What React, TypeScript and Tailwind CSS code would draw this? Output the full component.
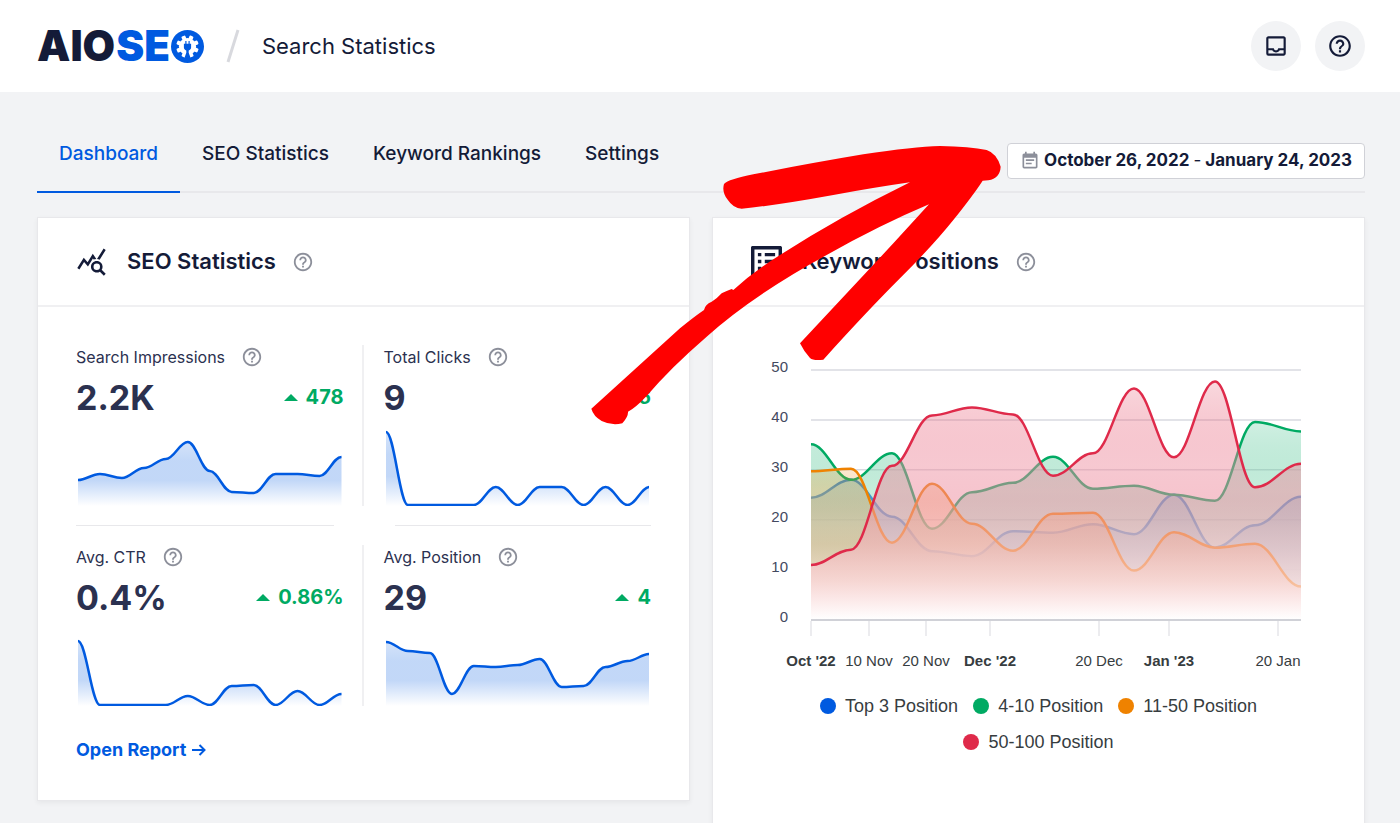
import type { ReactNode } from 'react'
import { MdEventNote, MdHelpOutline, MdOutlineInbox, MdQueryStats } from 'react-icons/md'

type Stat = { id: string, label: string, value: string, delta: string, points: number[] }
type Series = { id: string, name: string, color: string, mid: string, low: string, data: number[] }

const STATS: Stat[] = [
  { id: 'impressions', label: 'Search Impressions', value: '2.2K', delta: '478', points: [50, 44, 48, 38, 29, 12, 41, 62, 63, 44, 44, 46, 27] },
  { id: 'clicks', label: 'Total Clicks', value: '9', delta: '6', points: [2, 75, 75, 75, 75, 57, 75, 57, 57, 75, 57, 75, 57] },
  { id: 'ctr', label: 'Avg. CTR', value: '0.4%', delta: '0.86%', points: [11, 75, 75, 75, 75, 66, 75, 56, 55, 75, 61, 75, 64] },
  { id: 'position', label: 'Avg. Position', value: '29', delta: '4', points: [12, 21, 23, 64, 36, 37, 35, 29, 57, 56, 37, 31, 24] },
]

const SERIES: Series[] = [
  { id: 'top3', name: 'Top 3 Position', color: '#005ae0', mid: '#8db3f1', low: '#dde8fb', data: [24.4, 28, 20.6, 13.7, 12.7, 17.7, 17.4, 19.1, 17.1, 25, 14.4, 18.9, 24.6] },
  { id: 'top10', name: '4-10 Position', color: '#00aa63', mid: '#89d7b5', low: '#daf2e7', data: [35.1, 28, 33.3, 18.2, 25.5, 27.4, 32.6, 26.2, 26.8, 25, 23.8, 39.6, 37.7] },
  { id: 'top50', name: '11-50 Position', color: '#ef8200', mid: '#f5b577', low: '#fce6d6', data: [29.7, 30.2, 15.4, 27.2, 19.2, 13.8, 21.2, 21.4, 9.8, 17.5, 14.4, 15.2, 6.6] },
  { id: 'top100', name: '50-100 Position', color: '#df2a4a', mid: '#ed8d9f', low: '#fad3d6', data: [10.9, 14, 30.8, 40.9, 42.5, 41.1, 28.8, 33.3, 46.3, 32.5, 47.7, 26.5, 31.2] },
]

// weekly samples, the last one falls a day late
const WEEKS = [0, 7, 14, 21, 28, 35, 42, 49, 56, 63, 70, 77, 85]

const X_TICKS = [
  { x: 61, label: "Oct '22", bold: true },
  { x: 119, label: '10 Nov' },
  { x: 176, label: '20 Nov' },
  { x: 240, label: "Dec '22", bold: true },
  { x: 349, label: '20 Dec' },
  { x: 419, label: "Jan '23", bold: true },
  { x: 528, label: '20 Jan' },
]

// flat tangent at every sample
function smooth(pts: [number, number][]) {
  return pts.map(([x, y], i) => {
    if (!i) return `M${x} ${y}`
    const [px, py] = pts[i - 1]
    const k = (x - px) * 0.38
    return `C${px + k} ${py} ${x - k} ${y} ${x} ${y}`
  }).join('')
}

function Help({ topic }: { topic: string }) {
  return <button aria-label={`About ${topic}`} className="shrink-0 text-[#8c8f9a]"><MdHelpOutline size={22} /></button>
}

function Logo() {
  return (
    <a href="#home" aria-label="AIOSEO" className="flex items-center gap-px text-[42px] leading-none font-black text-[#141b38]">
      <span>AIO</span>
      <span className="text-[#005ae0]">SE</span>
      <svg width="33" height="33" viewBox="0 0 33 33">
        <circle cx="16.5" cy="16.5" r="16.5" fill="#005ae0" />
        <g fill="#fff">
          <circle cx="16.5" cy="16.5" r="8.600" />
          {[22, 67, 112, 157, 202, 247, 292, 337].map(a => (
            <rect key={a} x="14.400" y="5.200" width="4.200" height="5" rx="1" transform={`rotate(${a} 16.5 16.5)`} />
          ))}
        </g>
        <path d="M14.300 11v2.700h-1.400v3.800c0 1.500 1 2.500 2.400 2.900v2.300l-1.800 5h6l-1.800-5v-2.300c1.400-.4 2.400-1.400 2.400-2.900v-3.800h-1.400V11h-1.200v2.700h-2V11z" fill="#005ae0" />
      </svg>
    </a>
  )
}

function Sparkline({ id, points }: { id: string; points: number[] }) {
  const line = smooth(points.map((y, i) => [i * 22, y]))
  return (
    <div className="mt-3 px-[2px]">
      <svg viewBox="0 0 264 76" preserveAspectRatio="none" className="block h-[76px] w-full">
        <defs>
          <linearGradient id={`spark-${id}`} x1="0" y1="0" x2="0" y2="1">
            <stop offset="0" stopColor="#005ae0" stopOpacity=".17" />
            <stop offset=".3" stopColor="#005ae0" stopOpacity=".24" />
            <stop offset=".6" stopColor="#005ae0" stopOpacity=".24" />
            <stop offset="1" stopColor="#005ae0" stopOpacity="0" />
          </linearGradient>
        </defs>
        <path d={`${line}V76H0Z`} fill={`url(#spark-${id})`} />
        <path d={line} fill="none" stroke="#005ae0" strokeWidth="2.5" vectorEffect="non-scaling-stroke" />
      </svg>
    </div>
  )
}

function StatCell({ stat, left }: { stat: Stat; left: boolean }) {
  return (
    <div className={left ? 'border-r-2 border-[#f0f0f2] pr-[18px]' : 'pl-5'}>
      <div className="flex h-6 items-center gap-4 text-base text-[#2b3150]">
        <span>{stat.label}</span>
        <Help topic={stat.label} />
      </div>
      <div className="mt-2 mb-[13px] flex h-10 items-center justify-between font-bold">
        <span className="text-[34px] text-[#2b3150]">{stat.value}</span>
        <span className="flex items-center gap-2 text-xl text-[#00aa63]">
          <svg width="14" height="7" viewBox="0 0 14 7"><path d="M7 0l7 7H0z" fill="currentColor" /></svg>
          {stat.delta}
        </span>
      </div>
      <Sparkline id={stat.id} points={stat.points} />
    </div>
  )
}

function Card({ title, icon, children }: { title: string; icon: ReactNode; children: ReactNode }) {
  return (
    <section className="border border-[#e8e8eb] bg-white shadow-[0_2px_5px_rgba(0,0,0,0.05)]">
      <header className="flex h-[89px] items-center border-b-2 border-[#f0f0f2] px-[38px] text-[#141b38]">
        <span className="w-[51px]">{icon}</span>
        <h2 className="mr-4 text-[22px] font-semibold">{title}</h2>
        <Help topic={title} />
      </header>
      <div className="p-[38px]">{children}</div>
    </section>
  )
}

function PositionsChart() {
  const toX = (day: number) => 61 + Math.round(day * 490 / 85)
  const toY = (v: number) => 274.5 - v * 4.99
  return (
    <svg viewBox="1 0 575 335" role="img" aria-label="Keyword positions over time" className="block w-full font-['Liberation_Sans',Arial,sans-serif]">
      <defs>
        {SERIES.map(s => (
          <linearGradient key={s.id} id={`area-${s.id}`} x1="0" y1="0" x2="0" y2="1">
            <stop offset="0" stopColor={s.color} stopOpacity=".18" />
            <stop offset=".35" stopColor={s.mid} stopOpacity=".48" />
            <stop offset=".5" stopColor={s.mid} stopOpacity=".52" />
            <stop offset=".84" stopColor={s.low} stopOpacity=".7" />
            <stop offset="1" stopColor="#fff" stopOpacity=".95" />
          </linearGradient>
        ))}
      </defs>
      {[50, 40, 30, 20, 10, 0].map(v => (
        <g key={v}>
          <text x="38" y={toY(v) + 2} textAnchor="end" fontSize="15" fill="#434960">{v}</text>
          {v > 0 && <path d={`M61 ${toY(v)}H551`} stroke="#d9dae0" strokeWidth="1.5" />}
        </g>
      ))}
      {SERIES.map(s => {
        const line = smooth(s.data.map((v, i) => [toX(WEEKS[i]), toY(v)]))
        return (
          <g key={s.id}>
            <path d={`${line}V274.5H61Z`} fill={`url(#area-${s.id})`} />
            <path d={line} fill="none" stroke={s.color} strokeWidth="2.5" />
          </g>
        )
      })}
      <path d="M61 275H551" stroke="#d0d1d7" strokeWidth="2" />
      {X_TICKS.map(t => (
        <g key={t.label}>
          <path d={`M${t.x} 276v15`} stroke="#ececef" strokeWidth="2" />
          <text x={t.x} y="321" textAnchor="middle" fontSize="15" fontWeight={t.bold ? 700 : 400} fill="#373d3f">{t.label}</text>
        </g>
      ))}
    </svg>
  )
}

function Annotation() {
  return (
    <svg viewBox="0 0 1320 960" aria-hidden="true" className="pointer-events-none absolute top-[120px] right-[380px] h-[320px] w-[440px]">
      <path
        fill="#f00"
        d="M34 866L300 625Q340 592 372 570Q375 553 395 545Q410 537 425 520Q440 512 455 507L460 510Q520 455 600 405Q780 290 990 187Q880 203 760 225Q590 256 485 266Q460 266 442 238Q425 215 432 192Q445 178 520 163Q700 128 850 103Q1000 80 1080 78Q1170 80 1220 90Q1250 100 1262 140Q1260 175 1225 181L1208 182Q1180 225 1120 300Q1060 375 960 475Q860 575 730 719Q700 723 690 714Q672 695 660 670L940 370L1047 253Q900 315 740 405Q520 525 380 650Q270 745 200 828Q165 865 144 875Q145 890 127 910Q95 918 65 903Q40 888 34 866Z"
      />
    </svg>
  )
}

export default function App() {
  return (
    <div className="relative min-h-screen bg-[#f2f3f5] pb-8 font-['Inter',sans-serif] text-[#141b38]">
      <header className="flex h-[92px] items-center bg-white pr-[35px] pl-[37px]">
        <Logo />
        <svg width="14" height="34" viewBox="0 0 14 34" className="mx-[22px]"><path d="M12 1L2 33" stroke="#d8d9de" strokeWidth="3" /></svg>
        <h1 className="text-[22px]">Search Statistics</h1>
        <div className="ml-auto flex gap-[14px]">
          <button aria-label="Notifications" className="flex size-[50px] items-center justify-center rounded-full bg-[#f2f3f5]"><MdOutlineInbox size={26} /></button>
          <button aria-label="Help" className="flex size-[50px] items-center justify-center rounded-full bg-[#f2f3f5]"><MdHelpOutline size={26} /></button>
        </div>
      </header>

      <main className="pr-[35px] pl-[37px]">
        <div className="flex items-end justify-between border-b-2 border-[#e8e8eb]">
          <nav className="-mb-[2px] flex text-[19px] leading-7 font-medium">
            <a href="#dashboard" className="border-b-2 border-[#005ae0] px-[22px] pt-12 pb-[23px] text-[#005ae0]">Dashboard</a>
            <a href="#seo-statistics" className="px-[22px] pt-12">SEO Statistics</a>
            <a href="#keyword-rankings" className="px-[22px] pt-12">Keyword Rankings</a>
            <a href="#settings" className="px-[22px] pt-12">Settings</a>
          </nav>
          <button className="mb-3 flex h-9 items-center gap-1 rounded-[4px] border border-[#d0d1d7] bg-white px-3 text-[17px] font-bold">
            <MdEventNote size={20} className="text-[#8c8f9a]" />
            <span>October 26, 2022 <span className="font-normal">-</span> January 24, 2023</span>
          </button>
        </div>

        <div className="mt-6 grid grid-cols-2 items-start gap-[22px]">
          <Card title="SEO Statistics" icon={<MdQueryStats size={31} />}>
            <div className="grid grid-cols-2">
              {STATS.slice(0, 2).map((s, i) => <StatCell key={s.id} stat={s} left={!i} />)}
              <hr className="my-[19px] mr-[30px] border-[#e8e8eb]" />
              <hr className="my-[19px] ml-[31px] border-[#e8e8eb]" />
              {STATS.slice(2).map((s, i) => <StatCell key={s.id} stat={s} left={!i} />)}
            </div>
            <a href="#report" className="mt-8 inline-flex h-6 items-center gap-[6px] text-lg font-bold text-[#005ae0]">
              Open Report
              <svg width="14" height="14" viewBox="0 0 14 14" fill="none" stroke="currentColor" strokeWidth="2"><path d="M0 7h12.500M7.500 2l5 5-5 5" /></svg>
            </a>
          </Card>

          <Card
            title="Keyword Positions"
            icon={(
              <svg width="31" height="31" viewBox="3 3 18 18" fill="currentColor">
                <path d="M19 5v14H5V5h14m1.100-2H3.900c-.5 0-.9.4-.9.9v16.200c0 .4.4.9.9.9h16.200c.4 0 .9-.5.9-.9V3.900c0-.5-.5-.9-.9-.9zM11 7h6v2h-6zm0 4h6v2h-6zm0 4h6v2h-6zM7 7h2v2H7zm0 4h2v2H7zm0 4h2v2H7z" />
              </svg>
            )}
          >
            <PositionsChart />
            <ul className="mt-2 mb-16 flex flex-wrap justify-center gap-x-[15px] font-['Liberation_Sans',Arial,sans-serif] text-lg leading-9 text-[#373d3f]">
              {SERIES.map(s => (
                <li key={s.id} className="flex items-center gap-[9px]">
                  <span className="size-4 rounded-full" style={{ background: s.color }} />
                  {s.name}
                </li>
              ))}
            </ul>
          </Card>
        </div>
      </main>
      <Annotation />
    </div>
  )
}
